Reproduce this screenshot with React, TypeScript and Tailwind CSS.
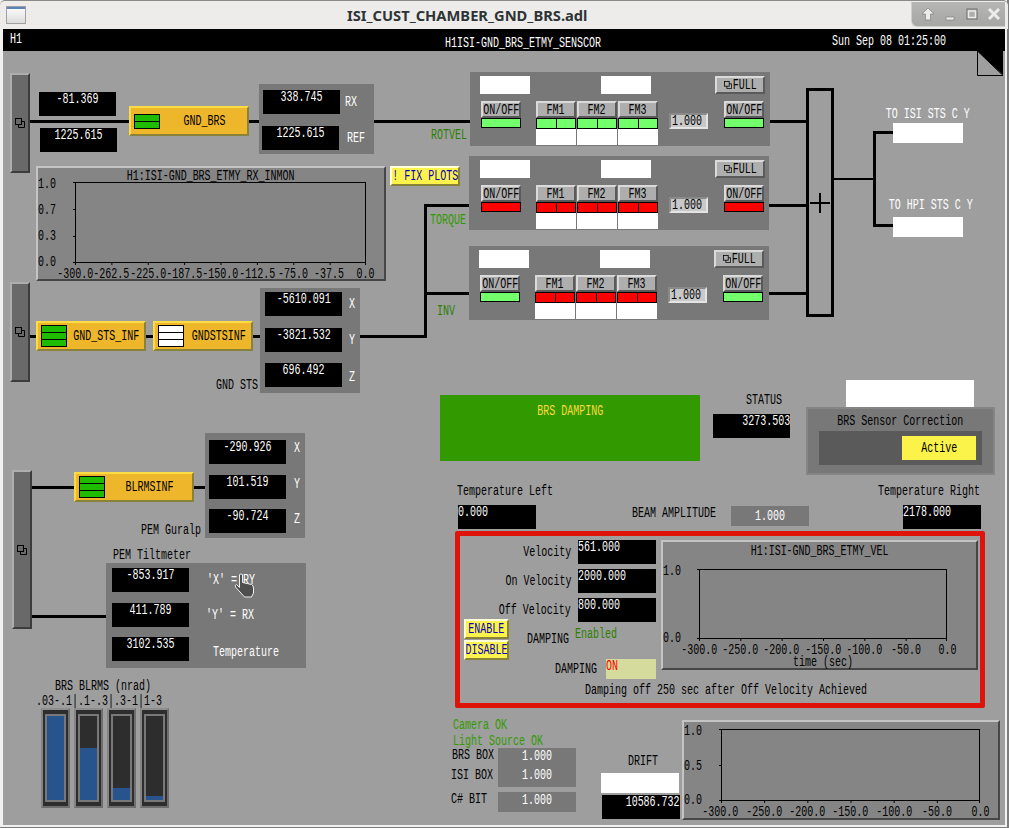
import React from 'react';

const mono = "font-['Liberation_Mono',monospace] text-[14px] leading-[12px] whitespace-nowrap scale-x-[0.714]";

type Align = 'center' | 'left' | 'right';

// free label on the schematic
function T({ className = '', children }: { className?: string; children: React.ReactNode }) {
  return <span className={`absolute origin-left ${mono} ${className}`}>{children}</span>;
}

// text in a box of its own, the box sets the width because the glyphs are squeezed
function Cell({ className = '', align = 'center', children }: { className?: string; align?: Align; children: React.ReactNode }) {
  const justify = align === 'center' ? 'justify-center' : align === 'left' ? 'justify-start' : 'justify-end';
  const origin = align === 'center' ? 'origin-center' : align === 'left' ? 'origin-left' : 'origin-right';
  return (
    <div className={`flex ${justify} ${className}`}>
      <span className={`${mono} ${origin}`}>{children}</span>
    </div>
  );
}

function Readout({ className = '', align = 'center', children }: { className?: string; align?: Align; children: React.ReactNode }) {
  return (
    <Cell align={align} className={`bg-black text-white pt-[1px] h-[24px] shrink-0 ${className}`}>
      {children}
    </Cell>
  );
}

function StackIcon({ size = 10 }: { size?: number }) {
  return (
    <svg width={size} height={size} viewBox="0 0 10 10" className="shrink-0" fill="none" stroke="#000" strokeWidth="1">
      <rect x="0.5" y="0.5" width="6" height="6" />
      <path d="M6.5 3.5h3v6h-6v-3" />
    </svg>
  );
}

function Slab({ className = '' }: { className?: string }) {
  return (
    <div className={`absolute w-[20px] flex items-center justify-center bg-[#696969] border-2 border-t-[#aeaeae] border-l-[#aeaeae] border-r-[#3c3c3c] border-b-[#3c3c3c] ${className}`}>
      <StackIcon />
    </div>
  );
}

function Blocks({ rows, color }: { rows: number; color: string }) {
  return (
    <div className="flex flex-col w-[26px] border border-black gap-[1px] bg-black shrink-0">
      {Array.from({ length: rows }).map((_, i) => (
        <div key={i} className={`h-[6px] ${color}`} />
      ))}
    </div>
  );
}

function OrangeButton({ className = '', rows, color, label }: { className?: string; rows: number; color: string; label: string }) {
  return (
    <div className={`absolute h-[30px] flex items-center bg-[#eeb62b] border-2 border-t-[#fbdc44] border-l-[#fbdc44] border-r-[#8b8239] border-b-[#8b8239] pl-[3px] ${className}`}>
      <Blocks rows={rows} color={color} />
      <Cell className="flex-1 min-w-0 pl-[2px] text-black">{label}</Cell>
    </div>
  );
}

function YellowButton({ className = '', children }: { className?: string; children: React.ReactNode }) {
  return (
    <div className={`flex items-center justify-center bg-[#fbf34a] text-[#0a00b8] border-2 border-t-[#ffffd8] border-l-[#ffffd8] border-r-[#8b8239] border-b-[#8b8239] ${className}`}>
      <Cell className="w-[30px]">{children}</Cell>
    </div>
  );
}

function GrayButton({ className = '', children }: { className?: string; children: React.ReactNode }) {
  return (
    <div className={`flex items-center justify-center h-[17px] bg-[#aeaeae] text-black border-2 border-t-[#dadada] border-l-[#dadada] border-r-[#5a5a5a] border-b-[#5a5a5a] ${className}`}>
      {children}
    </div>
  );
}

function OnOff({ led }: { led: string }) {
  return (
    <div className="w-[40px]">
      <GrayButton>
        <Cell>ON/OFF</Cell>
      </GrayButton>
      <div className={`h-[10px] border border-black ${led}`} />
    </div>
  );
}

function Fm({ label, led }: { label: string; led: string }) {
  return (
    <div className="w-[40px]">
      <GrayButton>
        <Cell>{label}</Cell>
      </GrayButton>
      <div className="flex h-[11px] border border-black gap-[1px] bg-black">
        <div className={`flex-1 ${led}`} />
        <div className={`flex-1 ${led}`} />
      </div>
      <div className="h-[16px] bg-white" />
    </div>
  );
}

function Bank({ className, onLed, offLed, fmLed }: { className: string; onLed: string; offLed: string; fmLed: string }) {
  return (
    <div className={`absolute w-[300px] h-[74px] bg-[#787878] pt-[4px] ${className}`}>
      <div className="flex">
        <div className="w-[50px] h-[18px] bg-white" />
        <div className="w-[50px] h-[18px] bg-white ml-[71px]" />
        <GrayButton className="w-[50px] !h-[18px] ml-[64px] gap-[1px]">
          <StackIcon size={8} />
          <Cell className="w-[24px]">FULL</Cell>
        </GrayButton>
      </div>
      <div className="flex items-start mt-[7px]">
        <div className="ml-[1px]">
          <OnOff led={onLed} />
        </div>
        <div className="flex gap-[1px] ml-[15px]">
          <Fm label="FM1" led={fmLed} />
          <Fm label="FM2" led={fmLed} />
          <Fm label="FM3" led={fmLed} />
        </div>
        <div className="w-[39px] h-[16px] mt-[12px] ml-[11px] flex items-center pl-[1px] bg-[#c8c8c8] text-black border-2 border-t-[#8a8a8a] border-l-[#8a8a8a] border-r-[#e4e4e4] border-b-[#e4e4e4]">
          <Cell align="left">1.000</Cell>
        </div>
        <div className="ml-[16px]">
          <OnOff led={offLed} />
        </div>
      </div>
    </div>
  );
}

function Axes({ w, h, xt, yt }: { w: number; h: number; xt: number; yt: number }) {
  const xs = Array.from({ length: xt + 1 }, (_, i) => (i * w) / xt);
  const ys = Array.from({ length: yt + 1 }, (_, i) => (i * h) / yt);
  return (
    <svg className="block overflow-visible" width={w} height={h} fill="none" stroke="#000" strokeWidth="1">
      <rect x="0.5" y="0.5" width={w - 1} height={h - 1} />
      {xs.map((x, i) => (
        <line key={i} x1={Math.min(x, w - 1) + 0.5} y1={h} x2={Math.min(x, w - 1) + 0.5} y2={h + 2} />
      ))}
      {ys.map((y, i) => (
        <line key={i} x1={-2} y1={Math.min(y, h - 1) + 0.5} x2={0} y2={Math.min(y, h - 1) + 0.5} />
      ))}
    </svg>
  );
}

interface PlotProps {
  className: string;
  headClass: string;
  yClass: string;
  xClass: string;
  title?: string;
  w: number;
  h: number;
  yLabels: string[];
  xLabels: string[];
  footer?: string;
}

function Plot({ className, headClass, yClass, xClass, title, w, h, yLabels, xLabels, footer }: PlotProps) {
  return (
    <div className={`bg-[#858585] text-black border-2 border-t-[#c4c4c4] border-l-[#c4c4c4] border-r-[#464646] border-b-[#464646] ${className}`}>
      <div className={headClass}>{title && <Cell>{title}</Cell>}</div>
      <div className="flex">
        <div className={`flex flex-col justify-between -mt-[4px] self-start shrink-0 ${yClass}`}>
          {yLabels.map((l) => (
            <Cell key={l} align="left">{l}</Cell>
          ))}
        </div>
        <div className="shrink-0" style={{ width: w }}>
          <Axes w={w} h={h} xt={xLabels.length - 1} yt={yLabels.length - 1} />
          <div className={`grid mt-[5px] ${xClass}`}>
            {xLabels.map((l) => (
              <Cell key={l} className="min-w-0">{l}</Cell>
            ))}
          </div>
          {footer && <Cell>{footer}</Cell>}
        </div>
      </div>
    </div>
  );
}

function Meter({ level }: { level: number }) {
  return (
    <div className="w-[29px] h-[100px] bg-[#2d2d2d] border-2 border-t-[#8e8e8e] border-l-[#858585] border-r-[#6e6e6e] border-b-[#6e6e6e] px-[2px] py-[4px]">
      <div className="h-full border-2 border-[#787878] flex flex-col justify-end">
        <div className="bg-[#27548d]" style={{ height: `${level}%` }} />
      </div>
    </div>
  );
}

function Wire({ className }: { className: string }) {
  return <div className={`absolute bg-black ${className}`} />;
}

function ChannelRow({ value, label, boxClass = '', labelClass }: { value: string; label: string; boxClass?: string; labelClass: string }) {
  return (
    <div className="flex items-center">
      <Readout className={`w-[77px] ${boxClass}`}>{value}</Readout>
      <Cell align="left" className={`text-white ${labelClass}`}>{label}</Cell>
    </div>
  );
}

function TitleBar() {
  return (
    <div className="relative h-[29px] shrink-0 -mx-[3px] rounded-t-[5px] border-t border-[#8a8a8a] bg-[#edeceb] flex items-center">
      <div className="ml-[6px] w-[20px] h-[18px] border border-[#a0a0a0] bg-gradient-to-b from-[#fdfdfd] to-[#dcdcdc] shadow-[inset_0_1px_0_#5b83bd,inset_0_2px_0_#5b83bd]" />
      <span className="ml-[321px] font-['Noto_Sans',sans-serif] font-bold text-[14.7px] text-[#2e3436] whitespace-nowrap">ISI_CUST_CHAMBER_GND_BRS.adl</span>
      <div className="absolute right-[3px] top-[1px] w-[94px] h-[25px] bg-gradient-to-b from-[#b6b6b4] to-[#a6a6a4] rounded-bl-[6px] border-l border-b border-[#cfcfcd] flex items-center pl-[8px] gap-[6px]">
        <svg width="16" height="16" viewBox="0 0 16 16" fill="#ececec" stroke="#777" strokeWidth="0.6">
          <path d="M8 2l6 6h-3.5v6h-5V8H2z" />
        </svg>
        <svg width="16" height="16" viewBox="0 0 16 16" fill="#ececec" stroke="#777" strokeWidth="0.6">
          <rect x="4" y="11" width="8" height="3" />
        </svg>
        <svg width="16" height="16" viewBox="0 0 16 16" fill="none" stroke="#ececec" strokeWidth="2">
          <rect x="3" y="3" width="10" height="10" stroke="#6e6e6e" strokeWidth="1" />
          <rect x="4.5" y="5" width="7" height="6.5" strokeWidth="1.5" />
        </svg>
        <svg width="16" height="16" viewBox="0 0 16 16" fill="none" stroke="#ececec" strokeWidth="3">
          <path d="M3 3l10 10M13 3L3 13" />
        </svg>
      </div>
    </div>
  );
}

export default function App() {
  const on = 'bg-[#73ff6b]';
  const off = 'bg-[#fd0000]';
  return (
    <div className="relative w-[1009px] h-[828px] overflow-hidden bg-[#7c7c7c] pr-[2px] pb-[1px]">
      <div className="h-full flex flex-col bg-[#f2f1f0] pl-[3px] pr-[2px] pb-[2px]">
        <TitleBar />
        <div className="h-[22px] shrink-0 bg-black text-white relative">
          <T className="left-[7px] top-[4px]">H1</T>
          <T className="left-[442px] top-[8px]">H1ISI-GND_BRS_ETMY_SENSCOR</T>
          <T className="left-[829px] top-[6px]">Sun Sep 08 01:25:00</T>
        </div>
        <div className="flex-1 bg-[#9e9e9e]" />
      </div>

      {/* schematic canvas, widgets sit where the screen file puts them */}
      <div className="absolute inset-0">
        <svg className="absolute left-[977px] top-[51px]" width="26" height="25" viewBox="0 0 26 25">
          <path d="M0 0H26V24Z" fill="#000" />
          <path d="M0.5 0V24.5H26L0.5 0Z" fill="#9e9e9e" stroke="#000" strokeWidth="1" />
        </svg>

        {/* wires */}
        <Wire className="left-[29px] top-[120px] w-[441px] h-[3px]" />
        <Wire className="left-[770px] top-[120px] w-[37px] h-[3px]" />
        <Wire className="left-[425px] top-[204px] w-[45px] h-[3px]" />
        <Wire className="left-[769px] top-[204px] w-[38px] h-[3px]" />
        <Wire className="left-[424px] top-[204px] w-[3px] h-[134px]" />
        <Wire className="left-[29px] top-[335px] w-[398px] h-[3px]" />
        <Wire className="left-[427px] top-[292px] w-[43px] h-[3px]" />
        <Wire className="left-[769px] top-[292px] w-[38px] h-[3px]" />
        <Wire className="left-[31px] top-[486px] w-[174px] h-[3px]" />
        <Wire className="left-[31px] top-[615px] w-[75px] h-[3px]" />
        <Wire className="left-[834px] top-[178px] w-[40px] h-[2px]" />
        <Wire className="left-[873px] top-[131px] w-[3px] h-[96px]" />
        <Wire className="left-[873px] top-[131px] w-[20px] h-[3px]" />
        <Wire className="left-[873px] top-[224px] w-[20px] h-[3px]" />

        {/* top row */}
        <Slab className="left-[10px] top-[73px] h-[100px]" />
        <div className="absolute left-[39px] top-[92px] flex flex-col gap-[12px]">
          <Readout className="w-[77px]">-81.369</Readout>
          <Readout className="w-[77px] ml-[1px]">1225.615</Readout>
        </div>
        <OrangeButton className="left-[129px] top-[106px] w-[120px]" rows={2} color="bg-[#1ebb00]" label="GND_BRS" />
        <div className="absolute left-[259px] top-[84px] w-[115px] h-[70px] bg-[#787878] pt-[6px] pl-[4px] flex flex-col gap-[12px]">
          <ChannelRow value="338.745" label="RX" labelClass="ml-[5px]" />
          <ChannelRow value="1225.615" label="REF" boxClass="-ml-[1px]" labelClass="ml-[8px]" />
        </div>
        <T className="left-[431px] top-[129px] text-[#2d7f00]">ROTVEL</T>
        <T className="left-[430px] top-[214px] text-[#339900]">TORQUE</T>
        <T className="left-[437px] top-[305px] text-[#2d7f00]">INV</T>

        <Plot
          className="absolute left-[36px] top-[166px] w-[350px] h-[115px]"
          headClass="h-[14px] pt-[2px]"
          yClass="w-[37px] h-[90px]"
          xClass="grid-cols-9 -mx-[18px]"
          title="H1:ISI-GND_BRS_ETMY_RX_INMON"
          w={291}
          h={81}
          yLabels={['1.0', '0.7', '0.3', '0.0']}
          xLabels={['-300.0', '-262.5', '-225.0', '-187.5', '-150.0', '-112.5', '-75.0', '-37.5', '0.0']}
        />
        <YellowButton className="absolute left-[390px] top-[166px] w-[70px] h-[20px]">! FIX PLOTS</YellowButton>

        {/* filter banks */}
        <Bank className="left-[470px] top-[72px] pl-[10px]" onLed={on} offLed={on} fmLed={on} />
        <Bank className="left-[469px] top-[156px] pl-[11px]" onLed={off} offLed={off} fmLed={off} />
        <Bank className="left-[469px] top-[246px] pl-[10px]" onLed={on} offLed={on} fmLed={off} />

        {/* summing junction */}
        <div className="absolute left-[806px] top-[88px] w-[28px] h-[229px] border-[3px] border-black flex items-center justify-center">
          <svg width="20" height="20" viewBox="0 0 20 20" stroke="#000" strokeWidth="2">
            <path d="M0 10H20M10 0V20" />
          </svg>
        </div>
        <div className="absolute left-[893px] top-[108px] w-[70px] text-white">
          <Cell className="h-[15px]">TO ISI STS C Y</Cell>
          <div className="h-[20px] bg-white" />
        </div>
        <div className="absolute left-[893px] top-[199px] w-[70px] text-white">
          <Cell className="h-[18px] pl-[6px]">TO HPI STS C Y</Cell>
          <div className="h-[20px] bg-white" />
        </div>

        {/* ground STS */}
        <Slab className="left-[10px] top-[282px] h-[100px]" />
        <OrangeButton className="left-[36px] top-[321px] w-[110px]" rows={3} color="bg-[#1ebb00]" label="GND_STS_INF" />
        <OrangeButton className="left-[153px] top-[321px] w-[100px]" rows={3} color="bg-white" label="GNDSTSINF" />
        <div className="absolute left-[260px] top-[288px] w-[100px] h-[105px] bg-[#787878] pt-[4px] pl-[5px] flex flex-col gap-[11.5px]">
          <ChannelRow value="-5610.091" label="X" labelClass="ml-[7px]" />
          <ChannelRow value="-3821.532" label="Y" labelClass="ml-[7px]" />
          <ChannelRow value="696.492" label="Z" labelClass="ml-[7px] mt-[4px]" />
        </div>
        <T className="left-[216px] top-[379px] text-black">GND STS</T>

        {/* guralp */}
        <Slab className="left-[12px] top-[470px] h-[159px]" />
        <OrangeButton className="left-[74px] top-[472px] w-[120px]" rows={3} color="bg-[#1ebb00]" label="BLRMSINF" />
        <div className="absolute left-[205px] top-[433px] w-[100px] h-[105px] bg-[#787878] pt-[7px] pl-[4px] flex flex-col gap-[10.5px]">
          <ChannelRow value="-290.926" label="X" labelClass="ml-[8px] mb-[8px]" />
          <ChannelRow value="101.519" label="Y" labelClass="ml-[8px] mb-[6px]" />
          <ChannelRow value="-90.724" label="Z" labelClass="ml-[8px] mb-[4px]" />
        </div>
        <T className="left-[141px] top-[524px] text-black">PEM Guralp</T>

        {/* tiltmeter */}
        <T className="left-[113px] top-[549px] text-black">PEM Tiltmeter</T>
        <div className="absolute left-[106px] top-[563px] w-[200px] h-[105px] bg-[#787878] pt-[5px] pl-[6px] flex flex-col gap-[10.5px]">
          <ChannelRow value="-853.917" label="'X' = RY" labelClass="ml-[18px]" />
          <ChannelRow value="411.789" label="'Y' = RX" labelClass="ml-[17px]" />
          <ChannelRow value="3102.535" label="Temperature" labelClass="ml-[24px] mt-[6px]" />
        </div>
        <svg className="absolute left-[234px] top-[573px]" width="21" height="25" viewBox="0 0 21 25">
          <path d="M5.5 1.5Q7 0.5 8.5 1.5V9.5L17.5 11.5Q19.5 12.5 19.5 15V20L17.5 24H10.5L1.5 14Q0.5 12 2.5 11.5L5.5 14.5Z" fill="#4e4e4e" stroke="#ededed" strokeWidth="1" />
        </svg>

        {/* BLRMS bars */}
        <div className="absolute left-[36px] top-[680px] text-black">
          <Cell align="left" className="h-[15px] pl-[19px]">BRS BLRMS (nrad)</Cell>
          <Cell align="left" className="h-[13px]">.03-.1|.1-.3|.3-1|1-3</Cell>
          <div className="flex gap-[4px] pl-[5px]">
            <Meter level={100} />
            <Meter level={62} />
            <Meter level={14} />
            <Meter level={5} />
          </div>
        </div>

        {/* damping */}
        <Cell className="absolute left-[440px] top-[395px] w-[260px] h-[66px] bg-[#339900] text-[#f9da3c] pt-[10px]">BRS DAMPING</Cell>
        <div className="absolute left-[713px] top-[394px] w-[77px]">
          <Cell align="left" className="h-[20px] pl-[33px] text-black">STATUS</Cell>
          <Readout align="right">3273.503</Readout>
        </div>
        <div className="absolute left-[846px] top-[380px] w-[128px] h-[27px] bg-white" />
        <div className="absolute left-[806px] top-[407px] w-[189px] h-[68px] bg-[#787878] border-2 border-[#858585] pt-[6px] px-[11px] text-black">
          <Cell className="h-[12px]">BRS Sensor Correction</Cell>
          <div className="mt-[4px] h-[34px] bg-[#5a5a5a] flex justify-end items-center pr-[6px]">
            <Cell className="w-[74px] h-[24px] items-center bg-[#fbf34a]">Active</Cell>
          </div>
        </div>
        <div className="absolute left-[457px] top-[485px] text-black">
          <Cell align="left" className="h-[20px]">Temperature Left</Cell>
          <Readout align="left" className="w-[78px] ml-[1px]">0.000</Readout>
        </div>
        <T className="left-[632px] top-[507px] text-black">BEAM AMPLITUDE</T>
        <Cell className="absolute left-[731px] top-[506px] w-[78px] h-[20px] items-center bg-[#787878] text-white">1.000</Cell>
        <div className="absolute left-[878px] top-[485px] text-black">
          <Cell align="left" className="h-[20px]">Temperature Right</Cell>
          <Readout align="left" className="w-[78px] ml-[25px]">2178.000</Readout>
        </div>

        {/* red damping box */}
        <div className="absolute left-[455px] top-[531px] w-[530px] h-[177px] border-[5px] border-[#de1309] rounded-[2px] pt-[4px] pl-[4px] text-black">
          <div className="flex gap-[5px]">
            <div className="w-[192px] shrink-0">
              <div className="flex flex-col gap-[5px]">
                {[
                  ['Velocity', '561.000'],
                  ['On Velocity', '2000.000'],
                  ['Off Velocity', '800.000'],
                ].map(([label, value]) => (
                  <div key={label} className="flex justify-end items-center gap-[7px]">
                    <Cell align="right" className="w-[72px] -mt-[1px]">{label}</Cell>
                    <Readout align="left" className="w-[78px]">{value}</Readout>
                  </div>
                ))}
              </div>
              <div className="flex -mt-[3px]">
                <div className="flex flex-col gap-[1px]">
                  <YellowButton className="w-[45px] h-[20px]">ENABLE</YellowButton>
                  <YellowButton className="w-[45px] h-[20px]">DISABLE</YellowButton>
                </div>
                <div className="flex-1">
                  <div className="flex">
                    <Cell align="left" className="w-[42px] ml-[18px] mt-[14px]">DAMPING</Cell>
                    <Cell align="left" className="w-[42px] ml-[6px] mt-[9px] text-[#2d7f00]">Enabled</Cell>
                  </div>
                  <div className="flex justify-end items-center gap-[9px] mt-[14px]">
                    <Cell align="left" className="w-[42px]">DAMPING</Cell>
                    <Cell align="left" className="w-[50px] h-[20px] pt-[1px] bg-[#d4db9d] text-[#fd0000]">ON</Cell>
                  </div>
                </div>
              </div>
            </div>
            <Plot
              className="w-[317px] h-[130px]"
              headClass="h-[27px] pt-[3px]"
              yClass="w-[36px] h-[79px]"
              xClass="grid-cols-7 -mx-[21px]"
              title="H1:ISI-GND_BRS_ETMY_VEL"
              w={248}
              h={70}
              yLabels={['1.0', '0.0']}
              xLabels={['-300.0', '-250.0', '-200.0', '-150.0', '-100.0', '-50.0', '0.0']}
              footer="time (sec)"
            />
          </div>
          <Cell align="left" className="mt-[5px] pl-[121px]">Damping off 250 sec after Off Velocity Achieved</Cell>
        </div>

        {/* status and box power */}
        <div className="absolute left-[451px] top-[719px] w-[125px] text-black">
          <Cell align="left" className="h-[16px] pl-[2px] text-[#339900]">Camera OK</Cell>
          <Cell align="left" className="h-[13px] pl-[2px] text-[#339900]">Light Source OK</Cell>
          <div className="flex">
            <Cell align="left" className="w-[47px] pl-[1px] pt-[1px]">BRS BOX</Cell>
            <Cell className="w-[78px] h-[19px] pt-[2px] bg-[#787878] text-white">1.000</Cell>
          </div>
          <div className="flex">
            <Cell align="left" className="w-[47px] pt-[2px]">ISI BOX</Cell>
            <Cell className="w-[78px] h-[20px] pt-[2px] bg-[#787878] text-white">1.000</Cell>
          </div>
          <div className="flex mt-[5px]">
            <Cell align="left" className="w-[47px] pt-[1px]">C# BIT</Cell>
            <Cell className="w-[78px] h-[20px] pt-[2px] bg-[#787878] text-white">1.000</Cell>
          </div>
        </div>
        <div className="absolute left-[601px] top-[755px] w-[79px]">
          <Cell align="left" className="h-[18px] pl-[27px] text-black">DRIFT</Cell>
          <div className="h-[20px] w-[78px] bg-white" />
          <Readout align="right" className="mt-[2px] ml-[1px]">10586.732</Readout>
        </div>

        <Plot
          className="absolute left-[682px] top-[720px] w-[318px] h-[100px]"
          headClass="h-[7px]"
          yClass="w-[37px] h-[81px]"
          xClass="grid-cols-7 -mx-[22px]"
          w={259}
          h={72}
          yLabels={['1.0', '0.5', '0.0']}
          xLabels={['-300.0', '-250.0', '-200.0', '-150.0', '-100.0', '-50.0', '0.0']}
        />
      </div>
    </div>
  );
}
